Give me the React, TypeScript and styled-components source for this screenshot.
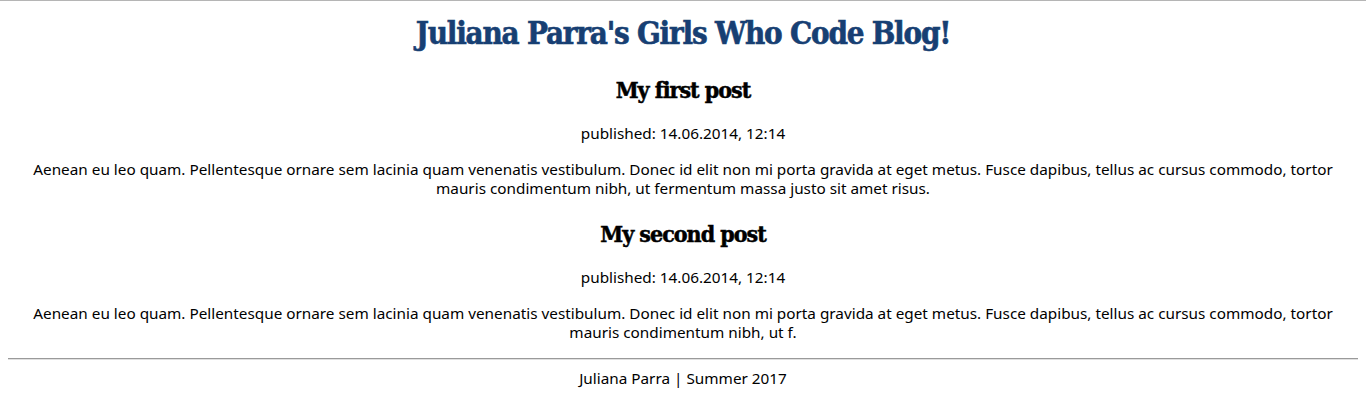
import styled, { createGlobalStyle } from 'styled-components';

const GlobalStyle = createGlobalStyle`
  html, body {
    margin: 0;
    background: #ffffff;
  }
`;

const Page = styled.div`
  border-top: 1px solid #b5b5b5;
  padding: 0 8px;
  font-family: 'Noto Sans', 'Open Sans', sans-serif;
  font-size: 15.3px;
  line-height: 19px;
  color: #000000;
  text-align: center;
`;

const Title = styled.h1`
  margin: 12px 0 0;
  font-family: 'DejaVu Serif Condensed', 'DejaVu Serif', 'Liberation Serif', serif;
  font-stretch: condensed;
  font-weight: 900;
  font-size: 31px;
  line-height: 40px;
  letter-spacing: -1.2px;
  -webkit-text-stroke: 0.6px #173f73;
  color: #173f73;
`;

const Post = styled.article<{ $first?: boolean }>`
  display: flex;
  flex-direction: column;
  align-items: center;
  margin-top: ${({ $first }) => ($first ? '22px' : '21px')};
`;

const PostTitle = styled.h2`
  margin: 0;
  font-family: 'DejaVu Serif Condensed', 'DejaVu Serif', 'Liberation Serif', serif;
  font-stretch: condensed;
  font-weight: 900;
  font-size: 23px;
  line-height: 30px;
  letter-spacing: -1px;
  -webkit-text-stroke: 0.5px #000000;
`;

const Published = styled.p`
  margin: 19px 0 0;
`;

const Body = styled.p`
  margin: 17px 0 0;
`;

const Rule = styled.hr`
  margin: 16px 0 0;
  border: none;
  border-top: 1px solid #9a9a9a;
  border-bottom: 1px solid #e0e0e0;
`;

const Footer = styled.footer`
  margin-top: 9px;
`;

const posts = [
  {
    title: 'My first post',
    date: '14.06.2014, 12:14',
    body: 'Aenean eu leo quam. Pellentesque ornare sem lacinia quam venenatis vestibulum. Donec id elit non mi porta gravida at eget metus. Fusce dapibus, tellus ac cursus commodo, tortor mauris condimentum nibh, ut fermentum massa justo sit amet risus.',
  },
  {
    title: 'My second post',
    date: '14.06.2014, 12:14',
    body: 'Aenean eu leo quam. Pellentesque ornare sem lacinia quam venenatis vestibulum. Donec id elit non mi porta gravida at eget metus. Fusce dapibus, tellus ac cursus commodo, tortor mauris condimentum nibh, ut f.',
  },
];

function App() {
  return (
    <>
      <GlobalStyle />
      <Page>
        <Title>Juliana Parra's Girls Who Code Blog!</Title>
        {posts.map((post, i) => (
          <Post key={post.title} $first={i === 0}>
            <PostTitle>{post.title}</PostTitle>
            <Published>published: {post.date}</Published>
            <Body>{post.body}</Body>
          </Post>
        ))}
        <Rule />
        <Footer>Juliana Parra | Summer 2017</Footer>
      </Page>
    </>
  );
}

export default App;
